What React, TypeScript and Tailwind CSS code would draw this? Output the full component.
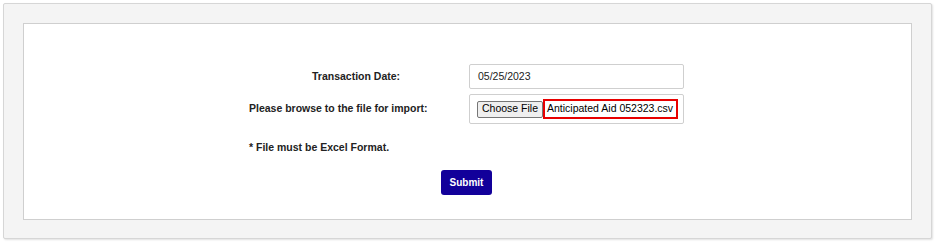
import React from 'react';

export default function App() {
  return (
    <div className="w-[936px] h-[242px] bg-white p-[3px] font-['Liberation_Sans',Arial,sans-serif] text-[10.5px] text-[#222]">
      <div className="h-[236px] w-[929px] bg-[#f4f4f4] border border-[#d6d6d6] rounded-[2px] shadow-[1px_1px_2px_rgba(0,0,0,0.12)] p-[19px]">
        <div className="h-[197px] bg-white border border-[#cfcfcf] pt-[40px]">
          <div className="ml-[225px] w-[435px]">
            <div className="flex items-center h-[25px]">
              <label className="w-[220px] pl-[63px] font-bold">Transaction Date:</label>
              <div className="w-[215px] h-[25px] border border-[#cfcfcf] rounded-[2px] flex items-center pl-[8px]">
                05/25/2023
              </div>
            </div>
            <div className="flex items-center h-[30px] mt-[5px]">
              <label className="w-[220px] font-bold">Please browse to the file for import:</label>
              <div className="w-[215px] h-[30px] border border-[#cfcfcf] rounded-[2px] flex items-center pl-[7px]">
                <span className="h-[17px] w-[66px] bg-[#efefef] border border-[#767676] rounded-[2px] flex items-center justify-center text-black">
                  Choose File
                </span>
                <span className="h-[20px] w-[135px] border-2 border-[#e80000] flex items-center pl-[2px] text-black whitespace-nowrap">
                  Anticipated Aid 052323.csv
                </span>
              </div>
            </div>
            <p className="mt-[16px] font-bold leading-[14px]">* File must be Excel Format.</p>
            <div className="flex justify-center mt-[16px]">
              <button className="w-[51px] h-[25px] bg-[#12009a] text-white text-[10px] font-bold rounded-[3px]">
                Submit
              </button>
            </div>
          </div>
        </div>
      </div>
    </div>
  );
}
